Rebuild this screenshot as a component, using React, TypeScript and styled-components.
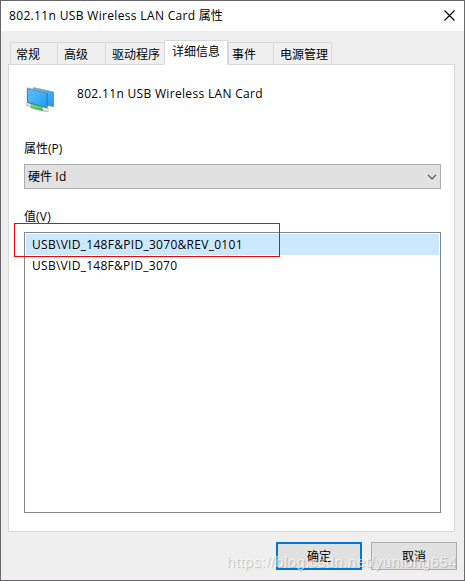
import React from "react";
import styled, { createGlobalStyle } from "styled-components";

const GlobalStyle = createGlobalStyle`
  *, *::before, *::after { box-sizing: border-box; }
  html, body { margin: 0; padding: 0; overflow: hidden; }
  body {
    font-family: "Open Sans", "Noto Sans CJK SC", sans-serif;
    font-size: 12px;
    color: #000;
  }
`;

const Dialog = styled.div`
  position: relative;
  width: 465px;
  height: 581px;
  display: flex;
  flex-direction: column;
  background: #efefef;
  border: 1px solid #69676b;
`;

const TitleBar = styled.header`
  flex: none;
  height: 30px;
  display: flex;
  align-items: center;
  justify-content: space-between;
  padding: 0 9px 1px 8px;
  background: #fff;
`;

const Label = styled.span<{ $spacing?: number }>`
  line-height: 18px;
  white-space: nowrap;
  letter-spacing: ${(p) => p.$spacing ?? 0}px;
`;

const CloseButton = styled.button`
  display: flex;
  padding: 0;
  border: 0;
  background: none;
`;

const TabStrip = styled.nav`
  flex: none;
  display: flex;
  align-items: flex-end;
  height: 25px;
  margin: 9px 0 -1px 9px;
  z-index: 1;
`;

const Tab = styled.div<{ $width: number; $active?: boolean; $inset?: number }>`
  width: ${(p) => p.$width}px;
  height: ${(p) => (p.$active ? 25 : 23)}px;
  padding: ${(p) => (p.$active ? 2 : 3)}px 0 0 ${(p) => p.$inset ?? 6}px;
  border: 1px solid #d9d9d9;
  border-right-width: ${(p) => (p.$active ? 1 : 0)}px;
  border-bottom-color: ${(p) => (p.$active ? "#fff" : "#d9d9d9")};
  background: ${(p) => (p.$active ? "#fff" : "#f0f0f0")};
  line-height: 18px;
  white-space: nowrap;

  &:last-child { border-right-width: 1px; }
`;

const Panel = styled.main`
  flex: none;
  height: 468px;
  margin: 0 9px 0 7px;
  padding: 19px 13px 18px 15px;
  display: flex;
  flex-direction: column;
  background: #fff;
  border: 1px solid #d9d9d9;
`;

const Device = styled.div`
  display: flex;
  height: 32px;
  gap: 21px;
`;

const DeviceName = styled(Label)`
  margin-top: 1px;
`;

const FieldLabel = styled(Label)<{ $top: number }>`
  margin-top: ${(p) => p.$top}px;
`;

const Select = styled.div`
  height: 25px;
  margin-top: 6px;
  padding: 0 3px;
  display: flex;
  flex: none;
  align-items: center;
  justify-content: space-between;
  background: #e1e1e1;
  border: 1px solid #adadad;
`;

const ValueList = styled.div`
  flex: none;
  height: 281px;
  margin-top: 6px;
  padding: 1px;
  border: 1px solid #828790;
`;

const ValueRow = styled.div<{ $selected?: boolean }>`
  display: flex;
  align-items: center;
  height: 21px;
  padding-left: 6px;
  background: ${(p) => (p.$selected ? "#cce8ff" : "#fff")};
`;

const Actions = styled.footer`
  display: flex;
  justify-content: flex-end;
  gap: 9px;
  padding: 10px 7px 0 0;
`;

const Button = styled.button<{ $primary?: boolean }>`
  width: 86px;
  height: 28px;
  padding: 0 0 1px;
  font: inherit;
  color: #000;
  background: #e1e1e1;
  border: ${(p) => (p.$primary ? "2px solid #0078d7" : "1px solid #adadad")};
`;

const Highlight = styled.div`
  position: absolute;
  left: 13px;
  top: 222px;
  width: 266px;
  height: 34px;
  border: 1px solid #fa0000;
`;

const Watermark = styled.div`
  position: absolute;
  right: 7px;
  bottom: 8px;
  font: 15px/20px "Liberation Sans", sans-serif;
  letter-spacing: 0.45px;
  color: rgba(255, 255, 255, 0.65);
  text-shadow: 1px 1px 1px rgba(0, 0, 0, 0.2);
  white-space: nowrap;
`;

const NetworkIcon = () => (
  <svg width="32" height="32" viewBox="0 0 32 32" aria-hidden="true">
    <defs>
      <linearGradient id="screen" x1="0" y1="0" x2="1" y2="1">
        <stop offset="0" stopColor="#5fc0fb" />
        <stop offset="0.55" stopColor="#3caef8" />
        <stop offset="1" stopColor="#2499ee" />
      </linearGradient>
      <linearGradient id="plug" x1="0" y1="0" x2="0" y2="1">
        <stop offset="0" stopColor="#8be38d" />
        <stop offset="1" stopColor="#35b34a" />
      </linearGradient>
    </defs>
    <path d="M9.5 3.9 29.3 8.2V22.6L9.5 17.5z" fill="url(#screen)" stroke="#4d7f9d" strokeWidth="0.9" />
    <path d="M9 3.4 29.7 7.8" stroke="#a9bfca" strokeWidth="0.7" />
    <path d="M4.2 20.4 7 21.4" stroke="#b6bfba" strokeWidth="4.6" strokeLinecap="round" />
    <path d="M4.3 20.3 7 21.2" stroke="#e0e4e2" strokeWidth="3.2" strokeLinecap="round" />
    <path d="M19 25 22.6 25.8" stroke="#b6bfba" strokeWidth="4.4" strokeLinecap="round" />
    <path d="M19 24.8 22.6 25.6" stroke="#e0e4e2" strokeWidth="3" strokeLinecap="round" />
    <path d="M7 19.6 18 22.9 18.6 27 7.2 23.9z" fill="url(#plug)" stroke="#48a453" strokeWidth="0.5" />
    <path d="M3.4 4.3 23.2 8.9V23.7L3.4 18.4z" fill="url(#screen)" stroke="#3f6d89" strokeWidth="0.9" />
    <path d="M3 3.8 23.6 8.5" stroke="#a9bfca" strokeWidth="0.7" />
  </svg>
);

export default function App() {
  return (
    <>
      <GlobalStyle />
      <Dialog>
        <TitleBar>
          <Label><Label $spacing={0.34}>802.11n USB Wireless LAN Card</Label> 属性</Label>
          <CloseButton aria-label="关闭">
            <svg width="11" height="11" viewBox="0 0 11 11">
              <path d="M.5.5 10.5 10.5M10.5.5.5 10.5" stroke="#000" strokeWidth="1.1" />
            </svg>
          </CloseButton>
        </TitleBar>
        <TabStrip>
          <Tab $width={47} $inset={5}>常规</Tab>
          <Tab $width={48}>高级</Tab>
          <Tab $width={59}>驱动程序</Tab>
          <Tab $width={64} $active $inset={7}>详细信息</Tab>
          <Tab $width={45} $inset={3}>事件</Tab>
          <Tab $width={59}>电源管理</Tab>
        </TabStrip>
        <Panel>
          <Device>
            <NetworkIcon />
            <DeviceName $spacing={0.32}>802.11n USB Wireless LAN Card</DeviceName>
          </Device>
          <FieldLabel $top={24}>属性(P)</FieldLabel>
          <Select>
            <Label>硬件 <Label $spacing={0.6}> Id</Label></Label>
            <svg width="10" height="6" viewBox="0 0 10 6">
              <path d="M1 .9 5 4.9 9 .9" fill="none" stroke="#505050" strokeWidth="1.2" />
            </svg>
          </Select>
          <FieldLabel $top={19}>值<Label $spacing={0.3}>(V)</Label></FieldLabel>
          <ValueList>
            <ValueRow $selected><Label $spacing={0.29}>USB\VID_148F&amp;PID_3070&amp;REV_0101</Label></ValueRow>
            <ValueRow><Label $spacing={0.28}>USB\VID_148F&amp;PID_3070</Label></ValueRow>
          </ValueList>
        </Panel>
        <Actions>
          <Button $primary>确定</Button>
          <Button>取消</Button>
        </Actions>
        <Highlight />
        <Watermark>https://blog.csdn.net/yunlong654</Watermark>
      </Dialog>
    </>
  );
}
